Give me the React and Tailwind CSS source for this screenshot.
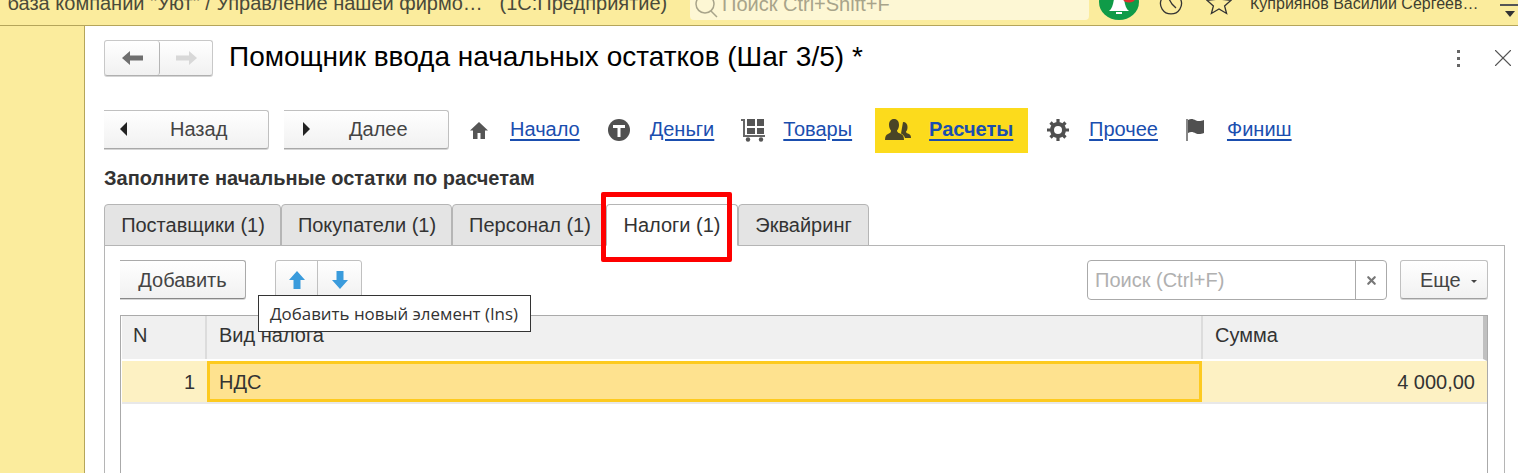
import { X } from "lucide-react";

const font = { fontFamily: '"Liberation Sans", Arial, sans-serif' };

function NavLink({ icon, children, className = "" }) {
  return (
    <div className={`flex items-center ${className}`}>
      {icon}
      <a className="text-[#1a4eaf] underline underline-offset-[3px] decoration-[1.5px] decoration-[#1a4eaf]">{children}</a>
    </div>
  );
}

function Tab({ children, active, className = "" }) {
  return (
    <div
      className={`h-[42px] flex items-center justify-center rounded-t-[4px] border border-[#b5b5b5] text-[#333] text-[20px] ${
        active ? "bg-white border-b-white" : "bg-[#e4e4e4]"
      } ${className}`}
    >
      {children}
    </div>
  );
}

export default function App() {
  return (
    <div style={font} className="w-[1518px] h-[473px] overflow-hidden bg-white flex flex-col">
      {/* Top bar */}
      <div className="h-[26px] shrink-0 bg-[#fbec9d] border-b border-[#b5a55a] flex items-end overflow-hidden relative">
        <div className="w-[680px] shrink-0 h-[25px] flex items-end text-[#4a4a3a] text-[20px] leading-[24px] whitespace-nowrap overflow-hidden">
          <span className="block pb-[10px] pl-[2px]">&nbsp;база компании "Уют" / Управление нашей фирмо…&nbsp;&nbsp;&nbsp;(1С:Предприятие)</span>
        </div>
        <div className="ml-[10px] w-[399px] h-[20px] mb-[5px] bg-[#fdf7d4] rounded-b-[4px] flex items-end text-[#a8a48a] text-[20px] overflow-hidden shrink-0">
          <svg width="32" height="22" viewBox="0 0 32 22" className="shrink-0">
            <circle cx="15" cy="6" r="9" fill="none" stroke="#a8a48a" strokeWidth="1.5" />
            <path d="M21 13l6 6" stroke="#a8a48a" strokeWidth="1.5" />
          </svg>
          <span className="pb-[4px] whitespace-nowrap leading-[24px]">Поиск Ctrl+Shift+F</span>
        </div>
        <svg width="40" height="26" viewBox="0 0 40 26" className="ml-[10px] shrink-0">
          <ellipse cx="20" cy="3" rx="20" ry="18" fill="#0f9b48" />
          <path d="M10 12c3-2 4-6 5-12h10c1 6 2 10 5 12z" fill="#fff" />
          <rect x="17" y="13" width="6" height="2" fill="#fff" />
          <ellipse cx="30" cy="0" rx="6" ry="3.500" fill="#e02f2f" />
        </svg>
        <svg width="26" height="26" viewBox="0 0 26 26" className="ml-[19px] shrink-0">
          <path d="M3.500 0a10.500 10.500 0 1 0 19 0" fill="none" stroke="#333" strokeWidth="1.300" />
          <path d="M11 0l3 5 4 4" fill="none" stroke="#333" strokeWidth="1.300" />
        </svg>
        <svg width="26" height="26" viewBox="0 0 26 26" className="ml-[22px] shrink-0">
          <path d="M13 -7l3.500 7.500 8.500 .8-6.400 5.600 2 7.600L13 10 5.400 14.500l2-7.600L1 1.300l8.500-.8z" fill="none" stroke="#333" strokeWidth="1.300" />
        </svg>
        <span className="ml-[18px] text-[#3f3f30] text-[16px] whitespace-nowrap pb-[11px] leading-[20px]">Куприянов Василий Сергеев…</span>
        <div className="absolute right-0 top-0 w-[18px]">
          <div className="h-[2px] mt-[4px] bg-[#555]" />
          <div className="w-0 h-0 mt-[5px] ml-[5px] border-x-[5px] border-x-transparent border-t-[6px] border-t-[#333]" />
        </div>
      </div>

      <div className="flex flex-1 min-h-0">
        {/* Left rail */}
        <div className="w-[85px] shrink-0 bg-[#fbec9d] border-r border-[#b5a55a]" />

        {/* Form */}
        <div className="flex-1 min-w-0 pl-[19px] pr-[13px] relative">
          {/* Title row */}
          <div className="flex items-center pt-[13px] h-[51px]">
            <div className="flex h-[36px] w-[109px] rounded-[3px] border border-[#c8c8c8] border-b-[#b0b0b0] shadow-[0_1px_0_#d5d5d5] bg-gradient-to-b from-white to-[#f1f1f1]">
              <div className="w-[55px] flex items-center justify-center border-r border-[#b5b5b5] rounded-r-[3px]">
                <svg width="21" height="14" viewBox="0 0 21 14">
                  <path d="M0 7l8-7v4.500h13v5H8V14z" fill="#6f6f6f" />
                </svg>
              </div>
              <div className="flex-1 flex items-center justify-center">
                <svg width="21" height="14" viewBox="0 0 21 14">
                  <path d="M21 7l-8-7v4.500H0v5h13V14z" fill="#d8d8d8" />
                </svg>
              </div>
            </div>
            <h1 className="ml-[16px] -mt-[2px] text-[28px] leading-[36px] text-black font-normal whitespace-nowrap">
              Помощник ввода начальных остатков (Шаг 3/5) *
            </h1>
            <div className="ml-auto flex items-center">
              <div className="flex flex-col gap-[4px] mr-[28px]">
                <span className="w-[3px] h-[3px] bg-[#666]" />
                <span className="w-[3px] h-[3px] bg-[#666]" />
                <span className="w-[3px] h-[3px] bg-[#666]" />
              </div>
              <X size={30} strokeWidth={0.9} className="text-[#555] -mr-[13px]" />
            </div>
          </div>

          {/* Step navigation */}
          <div className="flex items-center mt-[29px] h-[46px] text-[20px]">
            <div className="w-[165px] h-[39px] flex items-center pl-[16px] border border-l-0 border-[#c0c0c0] border-b-[#a8a8a8] rounded-r-[3px] shadow-[0_1px_0_#d5d5d5] bg-gradient-to-b from-white to-[#f1f1f1] text-[#444]">
              <span className="w-0 h-0 border-y-[7px] border-y-transparent border-r-[7px] border-r-[#222]" />
              <span className="ml-[43px]">Назад</span>
            </div>
            <div className="ml-[15px] w-[165px] h-[39px] flex items-center pl-[19px] border border-l-0 border-[#c0c0c0] border-b-[#a8a8a8] rounded-r-[3px] shadow-[0_1px_0_#d5d5d5] bg-gradient-to-b from-white to-[#f1f1f1] text-[#444]">
              <span className="w-0 h-0 border-y-[7px] border-y-transparent border-l-[7px] border-l-[#222]" />
              <span className="ml-[39px]">Далее</span>
            </div>
            <NavLink
              className="ml-[21px]"
              icon={
                <svg width="18" height="18" viewBox="0 0 18 18" className="mr-[22px] mt-[2px]">
                  <path d="M9 1L0 9.500h3V18h4.500v-6h3v6H15V9.500h3z" fill="#555" />
                </svg>
              }
            >
              Начало
            </NavLink>
            <NavLink
              className="ml-[28px]"
              icon={
                <svg width="22" height="22" viewBox="0 0 22 22" className="mr-[20px] mt-[2px]">
                  <circle cx="11" cy="11" r="11" fill="#505050" />
                  <path d="M5 6h12v3h-4.500v9h-3V9H5z" fill="#fff" />
                </svg>
              }
            >
              Деньги
            </NavLink>
            <NavLink
              className="ml-[27px]"
              icon={
                <svg width="24" height="24" viewBox="0 0 24 24" className="mr-[18px] mt-[1px]">
                  <path d="M0 1h4v16h20v2H2V3H0z" fill="#666" />
                  <rect x="6" y="1" width="8" height="7" fill="#555" />
                  <rect x="16" y="1" width="7" height="7" fill="#555" />
                  <rect x="6" y="10" width="8" height="6" fill="#555" />
                  <rect x="16" y="10" width="7" height="6" fill="#555" />
                  <circle cx="7" cy="21.500" r="2.200" fill="#555" />
                  <circle cx="20" cy="21.500" r="2.200" fill="#555" />
                </svg>
              }
            >
              Товары
            </NavLink>
            <div className="ml-[23px] mt-[2px] w-[153px] h-[45px] bg-[#fcdb1c] flex items-center pl-[10px] pb-[2px] shrink-0">
              <svg width="26" height="24" viewBox="0 0 26 24" className="mr-[18px] mt-[2px]">
                <path d="M18 4c3 0 4.500 2 4.500 5 0 2-.5 3.500-1.500 4.500 0 1.500 1.500 2 3 2.500 1.500 .7 2 2 2 4h-6c-.5-2-2-3.500-4-4.500z" fill="#4a4526" />
                <path d="M9 1c3.300 0 5 2.500 5 6 0 2.500-1 4.500-2 5.500 0 2 2 2.500 4 3.500 2 .9 3 2.500 3 6H0c0-3.500 1-5.100 3-6 2-1 3-1.500 3-3.500C5 11.500 4 9.500 4 7c0-3.500 1.700-6 5-6z" fill="#4a4526" />
              </svg>
              <a className="font-bold text-[#1a4eaf] underline underline-offset-[3px] decoration-[1.5px] decoration-[#1a4eaf]">Расчеты</a>
            </div>
            <NavLink
              className="ml-[19px]"
              icon={
                <svg width="22" height="22" viewBox="0 0 22 22" className="mr-[20px] mt-[2px]">
                  <circle cx="11" cy="11" r="6" fill="none" stroke="#505050" strokeWidth="4" />
                  <path
                    d="M11 0v5M11 17v5M0 11h5M17 11h5M3.500 3.500l3.500 3.500M15 15l3.500 3.500M18.500 3.500L15 7M7 15l-3.500 3.500"
                    stroke="#505050"
                    strokeWidth="3.200"
                  />
                </svg>
              }
            >
              Прочее
            </NavLink>
            <NavLink
              className="ml-[28px]"
              icon={
                <svg width="20" height="24" viewBox="0 0 20 24" className="mr-[21px]">
                  <rect x="0" y="2" width="2" height="22" fill="#888" />
                  <path d="M2 3c3-1.500 5-1 8 .5 3 1 5 .5 8-.5v13c-3 1-5 1.500-8 .5-3-1.500-5-2-8-.5z" fill="#505050" />
                </svg>
              }
            >
              Финиш
            </NavLink>
          </div>

          {/* Section caption */}
          <h2 className="mt-[14px] font-bold text-[20px] leading-[24px] text-[#333] whitespace-nowrap">
            Заполните начальные остатки по расчетам
          </h2>

          {/* Tabs */}
          <div className="flex mt-[14px] relative z-10 -mb-[1px]">
            <Tab className="w-[177px] pl-[1px]">Поставщики (1)</Tab>
            <Tab className="w-[171px] pl-[1px]">Покупатели (1)</Tab>
            <Tab className="w-[153px] pl-[3px]">Персонал (1)</Tab>
            <Tab active className="w-[132px] ml-[1px]">Налоги (1)</Tab>
            <Tab className="w-[131px]">Эквайринг</Tab>
          </div>

          {/* Panel */}
          <div className="h-[300px] border border-[#b5b5b5] pl-[15px] pr-[16px] pt-[14px] relative text-[20px]">
            <div className="flex items-start h-[42px]">
              <button className="w-[126px] h-[39px] border border-l-0 border-[#aaa] border-b-[#888] rounded-r-[3px] shadow-[0_1px_0_#d5d5d5] bg-gradient-to-b from-white to-[#f1f1f1] text-[#444]">
                Добавить
              </button>
              <div className="ml-[29px] flex w-[87px] h-[39px] border border-[#c0c0c0] rounded-[3px] bg-gradient-to-b from-white to-[#f1f1f1]">
                <div className="w-[42px] flex items-center justify-center border-r border-[#c0c0c0]">
                  <svg width="18" height="20" viewBox="0 0 18 20">
                    <path d="M9 1l8 9h-4.500v9h-7v-9H1z" fill="#3a9bdc" />
                  </svg>
                </div>
                <div className="flex-1 flex items-center justify-center">
                  <svg width="18" height="20" viewBox="0 0 18 20">
                    <path d="M9 19l8-9h-4.500V1h-7v9H1z" fill="#3a9bdc" />
                  </svg>
                </div>
              </div>
              <div className="ml-auto flex w-[300px] h-[40px] border border-[#aaa] rounded-[4px] bg-white">
                <span className="flex-1 flex items-center pl-[7px] text-[#b0b0b0]">Поиск (Ctrl+F)</span>
                <div className="w-[31px] flex items-center justify-center border-l border-[#aaa]">
                  <X size={13} strokeWidth={4} className="text-[#777]" />
                </div>
              </div>
              <button className="ml-[13px] w-[88px] h-[39px] flex items-center pl-[19px] border border-[#c0c0c0] border-b-[#a0a0a0] rounded-[3px] shadow-[0_1px_0_#d5d5d5] bg-gradient-to-b from-white to-[#f1f1f1] text-[#444]">
                Еще
                <span className="ml-[10px] mt-[3px] w-0 h-0 border-x-[3.5px] border-x-transparent border-t-[3.5px] border-t-[#444]" />
              </button>
            </div>

            {/* Table */}
            <div className="mt-[13px] border border-[#aaa] border-b-0 h-[200px] pl-px">
              <div className="flex h-[45px] bg-[#f0f0f0] text-[#333] border-b-2 border-white border-r-[4px] border-r-[#c0c0c0]">
                <div className="w-[85px] flex items-center pl-[11px] pb-[5px] border-r-2 border-[#dcdcdc]">N</div>
                <div className="w-[996px] flex items-center pl-[12px] pb-[5px] border-r-2 border-[#dcdcdc]">Вид налога</div>
                <div className="flex-1 flex items-center pl-[12px] pb-[5px]">Сумма</div>
              </div>
              <div className="flex h-[41px] bg-[#fdf1c3] text-[#333]">
                <div className="w-[85px] flex items-center justify-end pr-[12px]">1</div>
                <div className="w-[995px] flex items-center pl-[9px] bg-[#fee28f] border-[3px] border-[#fdca1f]">НДС</div>
                <div className="flex-1 flex items-center justify-end pr-[12px]">4 000,00</div>
              </div>
              <div className="h-[2px] bg-[#e8e8e8]" />
            </div>

            {/* Tooltip */}
            <div className="absolute left-[153px] top-[49px] w-[273px] h-[37px] bg-white border border-[#333] flex items-center pl-[11px] text-[#333] text-[16.900px] whitespace-nowrap z-20" style={{ fontFamily: '"Open Sans", sans-serif' }}>
              Добавить новый элемент (Ins)
            </div>
          </div>

          {/* Red callout over the active tab */}
          <div className="absolute left-[516px] top-[166px] w-[131px] h-[70px] border-[5px] border-[#fe0000] rounded-[2px] z-30" />
        </div>
      </div>
    </div>
  );
}
